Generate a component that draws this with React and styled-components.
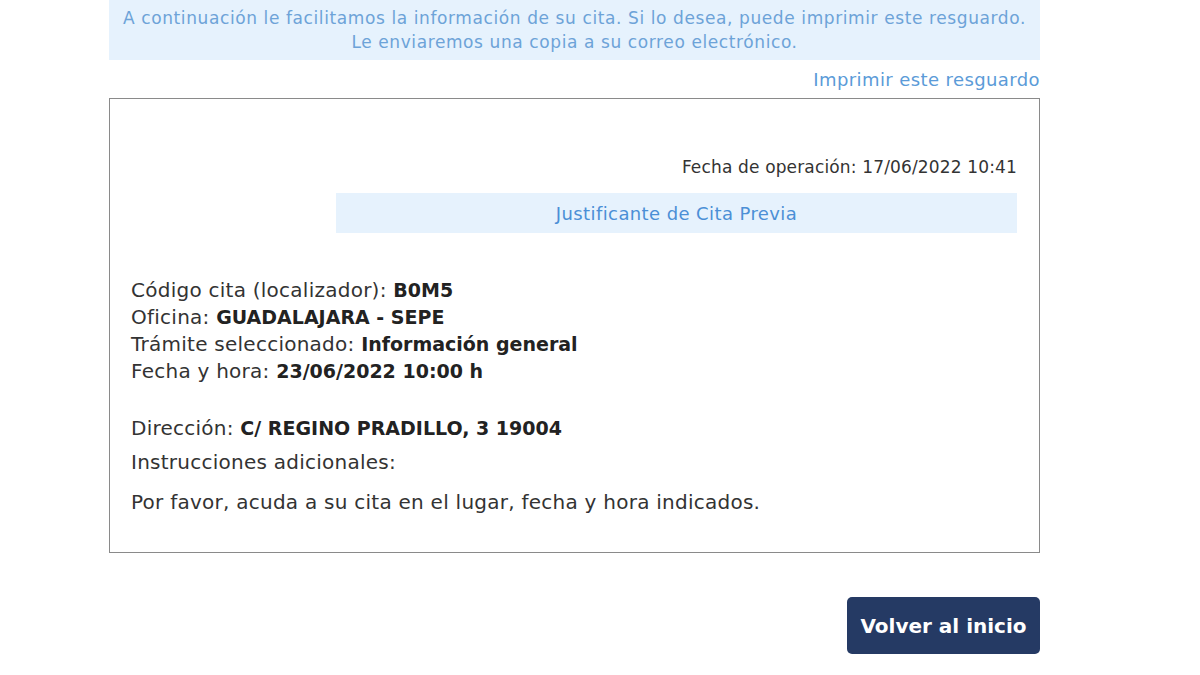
import React from "react";
import styled, { createGlobalStyle } from "styled-components";

const Global = createGlobalStyle`
  html, body { margin: 0; padding: 0; background: #fff; }
  body { font-family: "DejaVu Sans", "Open Sans", Arial, sans-serif; color: #333; }
`;

const Page = styled.div`
  width: 931px;
  margin-left: 109px;
  display: flex;
  flex-direction: column;
`;

const Notice = styled.div`
  background: #e6f2fd;
  color: #6da3d8;
  text-align: center;
  font-size: 17px;
  letter-spacing: 0.6px;
  line-height: 24px;
  padding: 6px 0 6px;
  height: 60px;
  box-sizing: border-box;
  white-space: nowrap;
`;

const PrintLink = styled.a`
  align-self: flex-end;
  color: #5b9bd8;
  font-size: 18px;
  letter-spacing: 0.4px;
  line-height: 24px;
  margin-top: 8px;
  margin-bottom: 6px;
  text-decoration: none;
`;

const Receipt = styled.div`
  border: 1px solid #8a8a8a;
  height: 455px;
  box-sizing: border-box;
  padding: 56px 22px 0 21px;
  display: flex;
  flex-direction: column;
`;

const OpDate = styled.div`
  align-self: flex-end;
  font-size: 17px;
  letter-spacing: 0.15px;
  line-height: 24px;
  color: #333;
`;

const TitleBar = styled.div`
  align-self: flex-end;
  width: 681px;
  height: 40px;
  margin-top: 14px;
  background: #e6f2fd;
  color: #4b8fd6;
  font-size: 18px;
  letter-spacing: 0.4px;
  display: flex;
  align-items: center;
  justify-content: center;
`;

const Details = styled.div`
  margin-top: 44px;
  font-size: 20px;
  letter-spacing: 0.25px;
  line-height: 27px;
  color: #333;
`;

const Line = styled.div`
  margin-top: ${(p) => p.$gap || 0}px;
`;

const Value = styled.b`
  font-weight: 700;
  font-size: 19px;
  color: #222;
  letter-spacing: 0;
`;

const Footer = styled.div`
  display: flex;
  justify-content: flex-end;
  margin-top: 44px;
`;

const Button = styled.button`
  background: #253a64;
  color: #fff;
  border: none;
  border-radius: 5px;
  width: 193px;
  height: 57px;
  font-family: "DejaVu Sans", "Open Sans", Arial, sans-serif;
  font-weight: 700;
  font-size: 20px;
  cursor: pointer;
`;

export default function App() {
  return (
    <>
      <Global />
      <Page>
        <Notice>
          A continuación le facilitamos la información de su cita. Si lo desea, puede imprimir este resguardo.
          <br />
          Le enviaremos una copia a su correo electrónico.
        </Notice>
        <PrintLink href="#">Imprimir este resguardo</PrintLink>
        <Receipt>
          <OpDate>Fecha de operación: 17/06/2022 10:41</OpDate>
          <TitleBar>Justificante de Cita Previa</TitleBar>
          <Details>
            <Line>Código cita (localizador): <Value>B0M5</Value></Line>
            <Line>Oficina: <Value>GUADALAJARA - SEPE</Value></Line>
            <Line>Trámite seleccionado: <Value>Información general</Value></Line>
            <Line>Fecha y hora: <Value>23/06/2022 10:00 h</Value></Line>
            <Line $gap={30}>Dirección: <Value>C/ REGINO PRADILLO, 3 19004</Value></Line>
            <Line $gap={7}>Instrucciones adicionales:</Line>
            <Line $gap={13}>Por favor, acuda a su cita en el lugar, fecha y hora indicados.</Line>
          </Details>
        </Receipt>
        <Footer>
          <Button>Volver al inicio</Button>
        </Footer>
      </Page>
    </>
  );
}
